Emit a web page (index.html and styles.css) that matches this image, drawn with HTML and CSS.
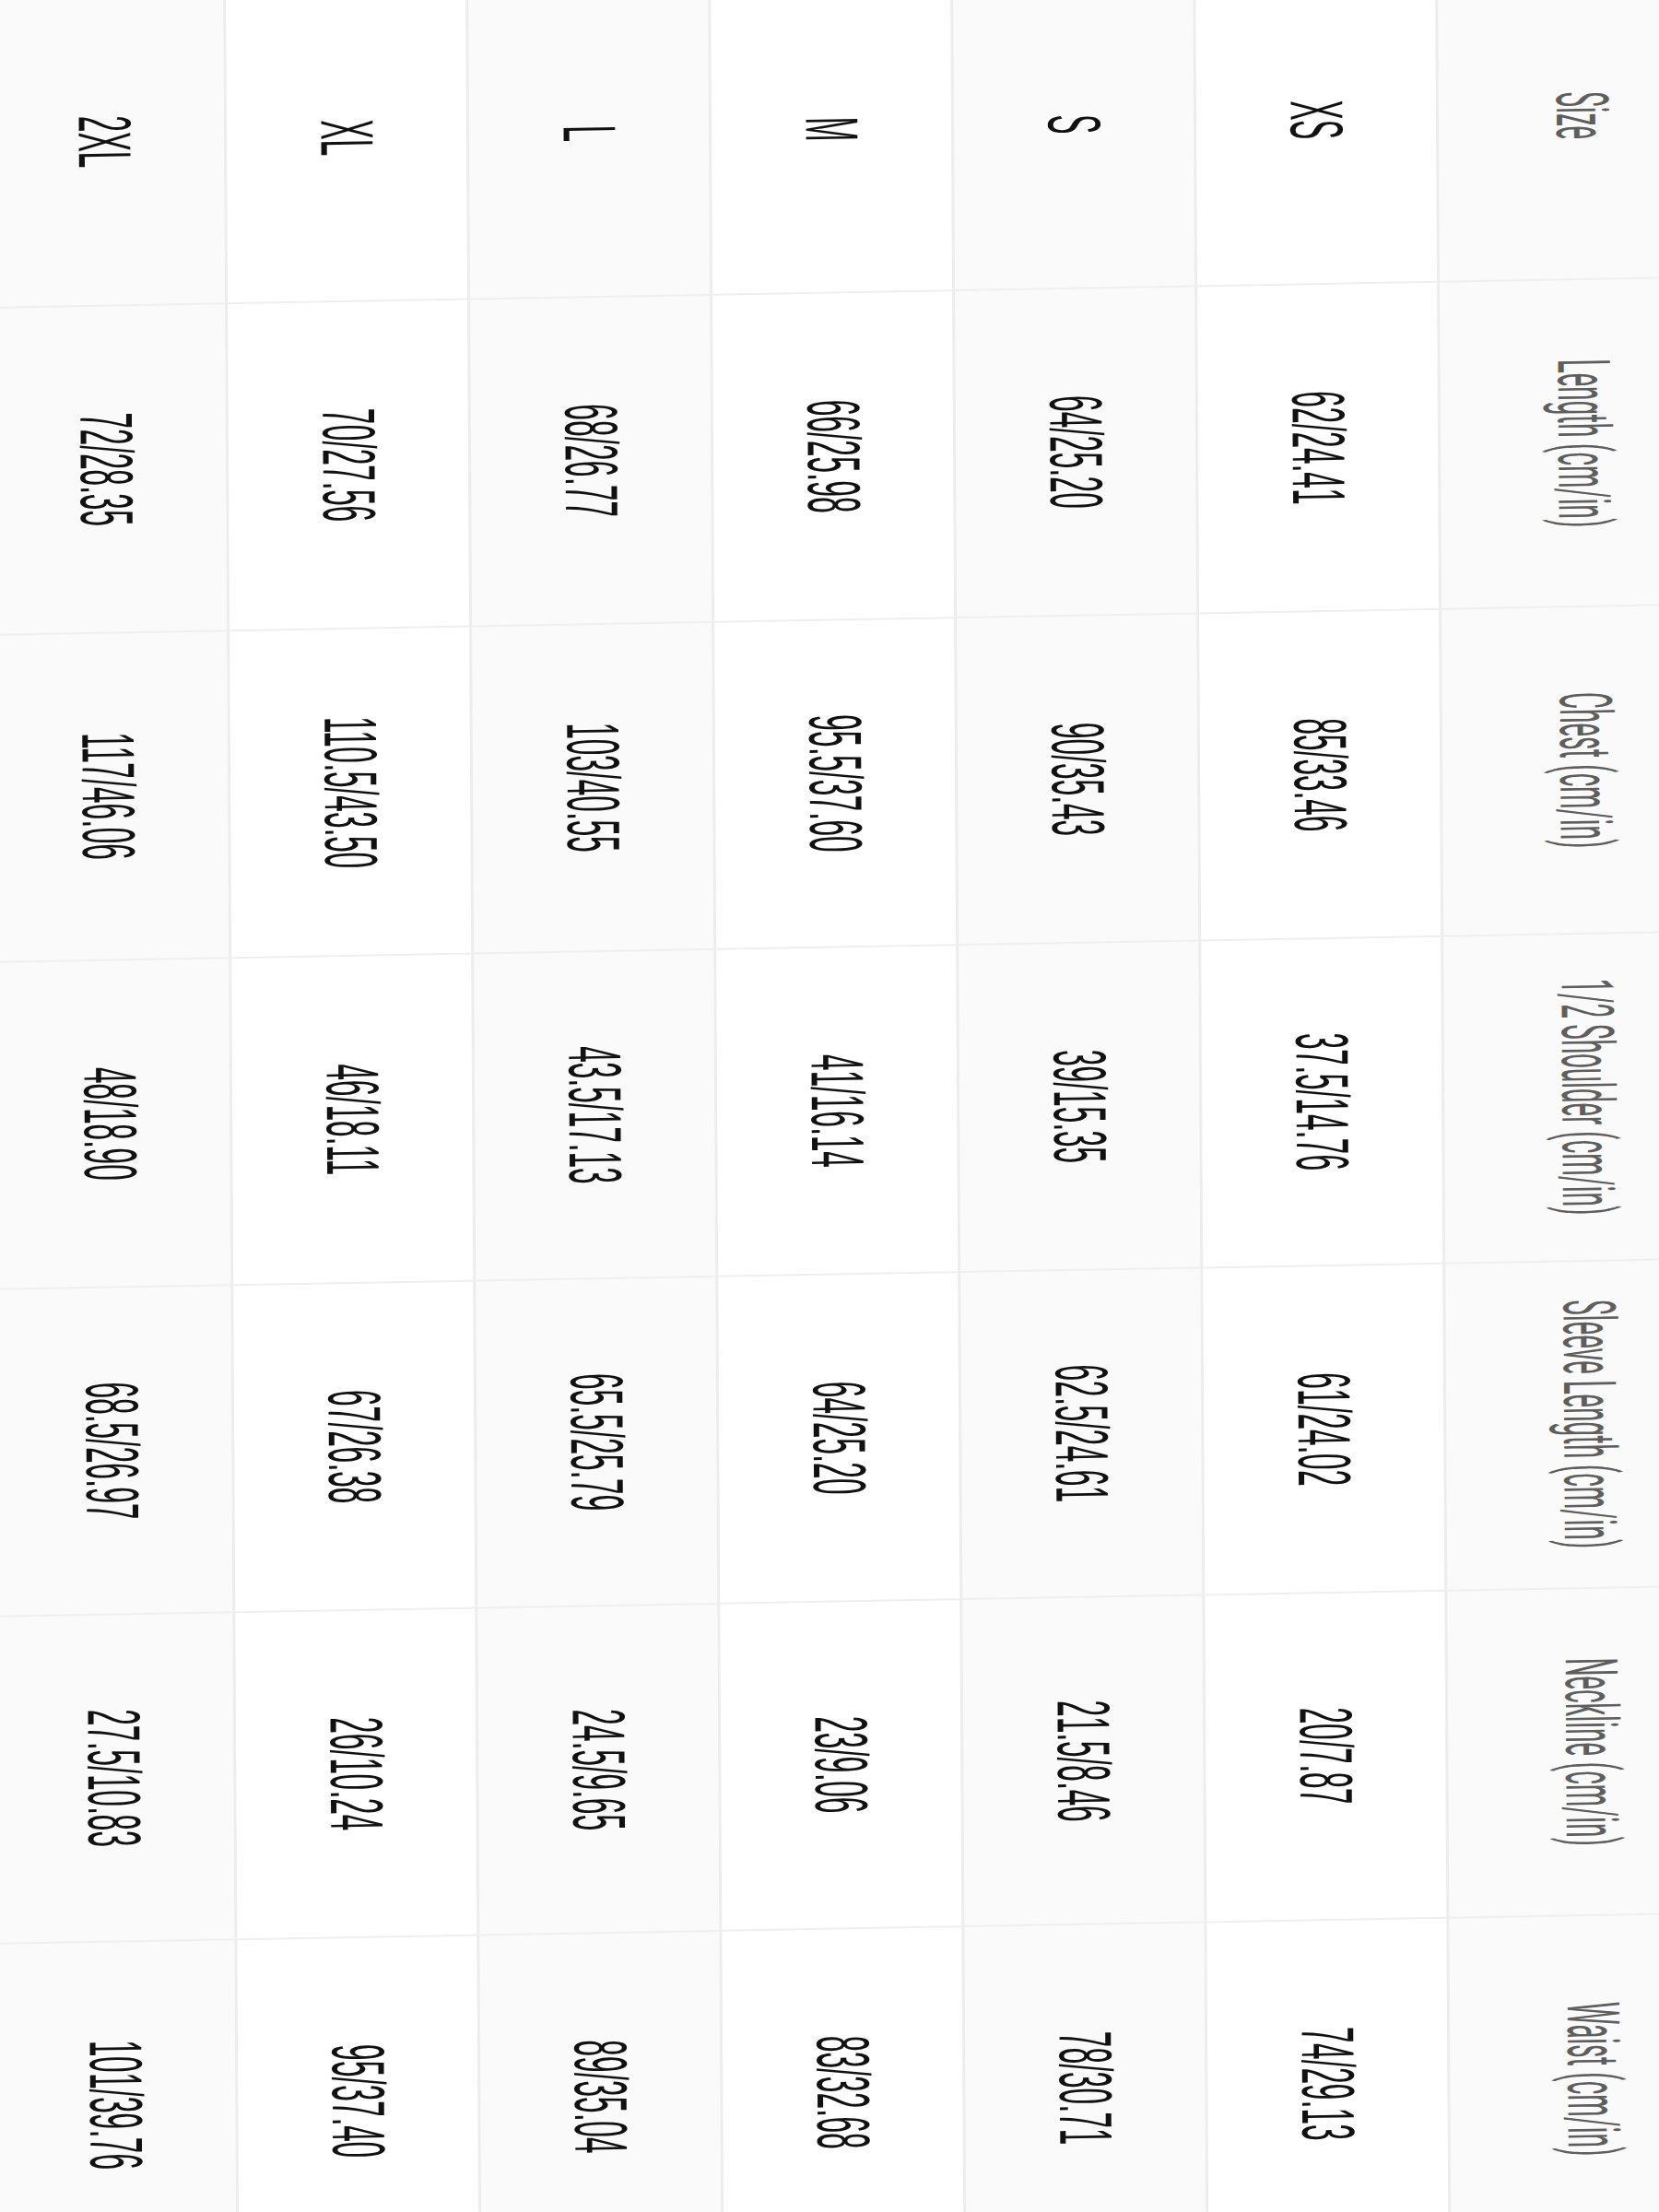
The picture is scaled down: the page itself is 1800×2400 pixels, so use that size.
FILE: index.html
```html
<!DOCTYPE html>
<html lang="en">
<head>
<meta charset="utf-8">
<title>Size chart</title>
<link rel="stylesheet" href="styles.css">
</head>
<body>
<div class="chart">
  <div class="stripe head alt">
    <div class="cell"><span class="txt">Size</span></div>
    <div class="cell"><span class="txt">Length (cm/in)</span></div>
    <div class="cell"><span class="txt">Chest (cm/in)</span></div>
    <div class="cell"><span class="txt">1/2 Shoulder (cm/in)</span></div>
    <div class="cell"><span class="txt">Sleeve Length (cm/in)</span></div>
    <div class="cell"><span class="txt">Neckline (cm/in)</span></div>
    <div class="cell"><span class="txt">Waist (cm/in)</span></div>
  </div>
  <div class="stripe">
    <div class="cell"><span class="txt">XS</span></div>
    <div class="cell"><span class="txt">62/24.41</span></div>
    <div class="cell"><span class="txt">85/33.46</span></div>
    <div class="cell"><span class="txt">37.5/14.76</span></div>
    <div class="cell"><span class="txt">61/24.02</span></div>
    <div class="cell"><span class="txt">20/7.87</span></div>
    <div class="cell"><span class="txt">74/29.13</span></div>
  </div>
  <div class="stripe alt">
    <div class="cell"><span class="txt">S</span></div>
    <div class="cell"><span class="txt">64/25.20</span></div>
    <div class="cell"><span class="txt">90/35.43</span></div>
    <div class="cell"><span class="txt">39/15.35</span></div>
    <div class="cell"><span class="txt">62.5/24.61</span></div>
    <div class="cell"><span class="txt">21.5/8.46</span></div>
    <div class="cell"><span class="txt">78/30.71</span></div>
  </div>
  <div class="stripe">
    <div class="cell"><span class="txt">M</span></div>
    <div class="cell"><span class="txt">66/25.98</span></div>
    <div class="cell"><span class="txt">95.5/37.60</span></div>
    <div class="cell"><span class="txt">41/16.14</span></div>
    <div class="cell"><span class="txt">64/25.20</span></div>
    <div class="cell"><span class="txt">23/9.06</span></div>
    <div class="cell"><span class="txt">83/32.68</span></div>
  </div>
  <div class="stripe alt">
    <div class="cell"><span class="txt">L</span></div>
    <div class="cell"><span class="txt">68/26.77</span></div>
    <div class="cell"><span class="txt">103/40.55</span></div>
    <div class="cell"><span class="txt">43.5/17.13</span></div>
    <div class="cell"><span class="txt">65.5/25.79</span></div>
    <div class="cell"><span class="txt">24.5/9.65</span></div>
    <div class="cell"><span class="txt">89/35.04</span></div>
  </div>
  <div class="stripe">
    <div class="cell"><span class="txt">XL</span></div>
    <div class="cell"><span class="txt">70/27.56</span></div>
    <div class="cell"><span class="txt">110.5/43.50</span></div>
    <div class="cell"><span class="txt">46/18.11</span></div>
    <div class="cell"><span class="txt">67/26.38</span></div>
    <div class="cell"><span class="txt">26/10.24</span></div>
    <div class="cell"><span class="txt">95/37.40</span></div>
  </div>
  <div class="stripe alt">
    <div class="cell"><span class="txt">2XL</span></div>
    <div class="cell"><span class="txt">72/28.35</span></div>
    <div class="cell"><span class="txt">117/46.06</span></div>
    <div class="cell"><span class="txt">48/18.90</span></div>
    <div class="cell"><span class="txt">68.5/26.97</span></div>
    <div class="cell"><span class="txt">27.5/10.83</span></div>
    <div class="cell"><span class="txt">101/39.76</span></div>
  </div>
</div>
</body>
</html>
```

FILE: styles.css
```css
html, body {
  margin: 0;
  padding: 0;
  overflow: hidden;
  background: #ffffff;
}

.chart {
  display: flex;
  flex-direction: row-reverse;
  width: 1890px;
  margin: -20.5px 0 0 -21px;
  transform-origin: 0 0;
  transform: matrix(1, -0.0179, 0.0058, 1, 0, 0);
}

.stripe {
  flex: none;
  width: 263px;
  box-sizing: border-box;
  display: flex;
  flex-direction: column;
  background: #ffffff;
  border-left: 3px solid #ededed;
}

.stripe.alt {
  background: #fafafa;
}

.stripe.head {
  width: 312px;
}

.cell {
  flex: none;
  height: 355px;
  box-sizing: border-box;
  border-bottom: 2px solid #efefef;
  display: flex;
  align-items: center;
  justify-content: center;
}

.txt {
  writing-mode: vertical-rl;
  white-space: nowrap;
  font-family: "Liberation Sans", Arial, sans-serif;
  font-size: 81px;
  line-height: 1.15;
  color: #111111;
  transform: scaleY(0.39);
}

.head .txt {
  font-family: Roboto, "Liberation Sans", sans-serif;
  font-weight: 400;
  font-size: 79px;
  color: #5e5e5e;
  transform: scaleY(0.35);
}
```
